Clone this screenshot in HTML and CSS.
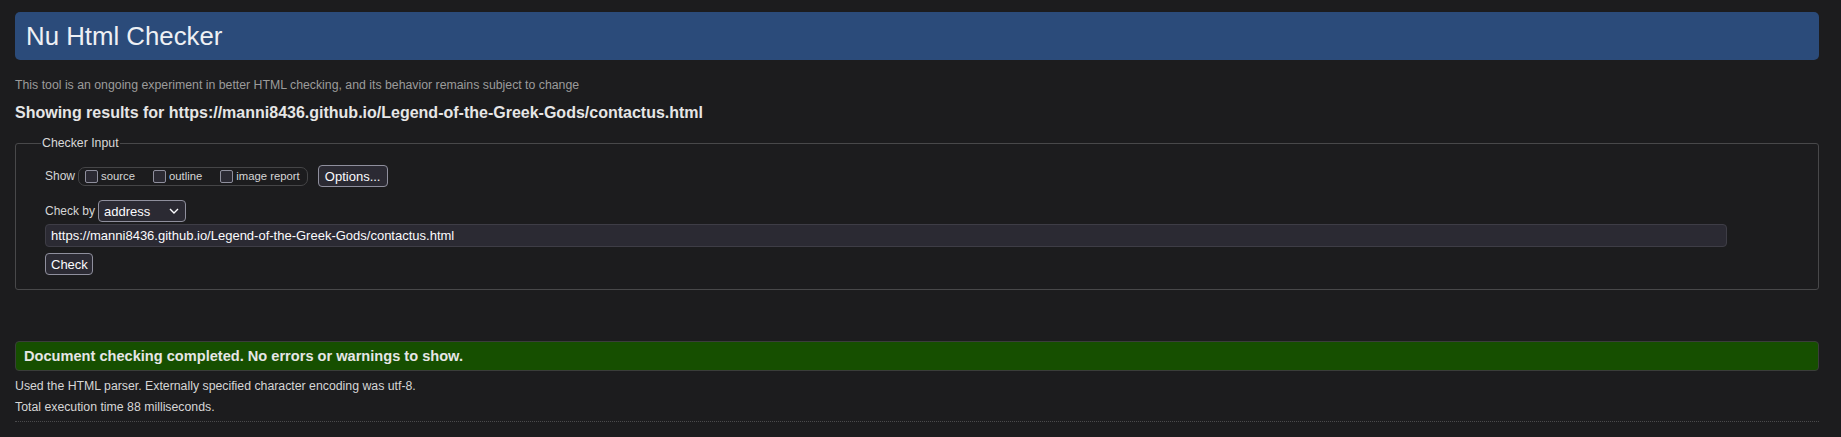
FILE: index.html
```html
<!DOCTYPE html>
<html lang="en">
<head>
<meta charset="utf-8">
<title>Nu Html Checker</title>
<link rel="stylesheet" href="styles.css">
</head>
<body>
<h1 class="title">Nu Html Checker</h1>
<p class="about">This tool is an ongoing experiment in better HTML checking, and its behavior remains subject to change</p>
<h2 class="results">Showing results for https://manni8436.github.io/Legend-of-the-Greek-Gods/contactus.html</h2>
<form class="checker">
  <fieldset class="input-set">
    <legend class="legend">Checker Input</legend>
    <div class="row row-show">
      <span class="label">Show</span>
      <span class="opts">
        <label class="opt"><input type="checkbox" class="cb"><span>source</span></label>
        <label class="opt"><input type="checkbox" class="cb"><span>outline</span></label>
        <label class="opt opt-last"><input type="checkbox" class="cb"><span>image report</span></label>
      </span>
      <button type="button" class="btn btn-options">Options...</button>
    </div>
    <div class="row row-by">
      <span class="label">Check by</span>
      <span class="select">address<svg class="chev" width="10" height="6" viewBox="0 0 10 6"><path d="M1 1l4 4 4-4" fill="none" stroke="#fbfbfe" stroke-width="1.4"/></svg></span>
    </div>
    <div class="urlbox">https://manni8436.github.io/Legend-of-the-Greek-Gods/contactus.html</div>
    <button type="button" class="btn btn-check">Check</button>
  </fieldset>
</form>
<p class="success">Document checking completed. No errors or warnings to show.</p>
<p class="details details-first">Used the HTML parser. Externally specified character encoding was utf-8.</p>
<p class="details">Total execution time 88 milliseconds.</p>
<hr class="rule">
</body>
</html>
```
FILE: styles.css
```css
html, body {
  background: #1c1c1e;
}
body {
  margin: 0;
  padding: 12px 22px 0 15px;
  font-family: "Liberation Sans", Arial, sans-serif;
  color: #e3e3e3;
}
.title {
  margin: 0;
  height: 48px;
  line-height: 48px;
  padding: 0 11px;
  background: #2b4b7a;
  border-radius: 5px;
  font-size: 25.8px;
  font-weight: normal;
  color: #eef0f4;
}
.about {
  margin: 17px 0 0;
  font-size: 12.3px;
  line-height: 16px;
  color: #9b9b9b;
}
.results {
  margin: 10px 0 0;
  font-size: 16px;
  line-height: 20px;
  font-weight: bold;
  color: #e6e6e6;
}
.checker {
  margin: 13px 0 0;
}
.input-set {
  margin: 0;
  border: 1px solid #48484a;
  border-radius: 3px;
  padding: 15px 0 14px 29px;
}
.legend {
  margin-left: -4px;
  padding: 0 1px;
  font-size: 12.3px;
  line-height: 14px;
  color: #d8d8d8;
}
.row {
  display: flex;
  align-items: center;
}
.label {
  font-size: 12px;
  color: #d6d6d6;
}
.row-show {
  height: 22px;
}
.opts {
  display: flex;
  align-items: center;
  height: 17px;
  margin-left: 3px;
  padding: 0 7px 0 6px;
  border: 1px solid #454547;
  border-radius: 7px;
}
.opt {
  display: flex;
  align-items: center;
  font-size: 11.3px;
  color: #d6d6d6;
  margin-right: 18px;
}
.opt-last {
  margin-right: 0;
}
.cb {
  appearance: none;
  -webkit-appearance: none;
  margin: 0 3px 0 0;
  width: 13px;
  height: 13px;
  background: #2b2a33;
  border: 1px solid #8f8f9d;
  border-radius: 2px;
  box-sizing: border-box;
}
.btn {
  font-family: "Liberation Sans", Arial, sans-serif;
  background: #2b2a33;
  color: #fbfbfe;
  border: 1px solid #8f8f9d;
  border-radius: 4px;
  height: 22px;
  padding: 0 5px;
  font-size: 13px;
  box-sizing: border-box;
}
.btn-options {
  margin-left: 10px;
  width: 70px;
}
.row-by {
  margin-top: 13px;
  height: 22px;
}
.select {
  display: flex;
  align-items: center;
  justify-content: space-between;
  box-sizing: border-box;
  width: 88px;
  height: 22px;
  margin-left: 3px;
  padding: 0 6px 0 5px;
  background: #2b2a33;
  border: 1px solid #8f8f9d;
  border-radius: 4px;
  font-size: 13px;
  color: #fbfbfe;
}
.urlbox {
  margin-top: 2px;
  box-sizing: border-box;
  width: 1682px;
  height: 23px;
  line-height: 21px;
  padding: 0 5px;
  background: #2b2a33;
  border: 1px solid #3e3d46;
  border-radius: 4px;
  font-size: 13px;
  color: #fbfbfe;
}
.btn-check {
  display: block;
  margin-top: 6px;
  width: 48px;
}
.success {
  margin: 51px 0 0;
  height: 30px;
  box-sizing: border-box;
  line-height: 28px;
  padding: 0 8px;
  background: #164f00;
  border: 1px solid #3a3d3a;
  border-radius: 4px;
  font-size: 14.6px;
  font-weight: bold;
  color: #e6e6e6;
}
.details {
  margin: 0;
  font-size: 12.3px;
  line-height: 21px;
  color: #d6d6d6;
}
.details-first {
  margin-top: 5px;
}
.rule {
  margin: 3px 0 0;
  border: 0;
  border-top: 1px dotted #4a4a4c;
  height: 0;
}
```
